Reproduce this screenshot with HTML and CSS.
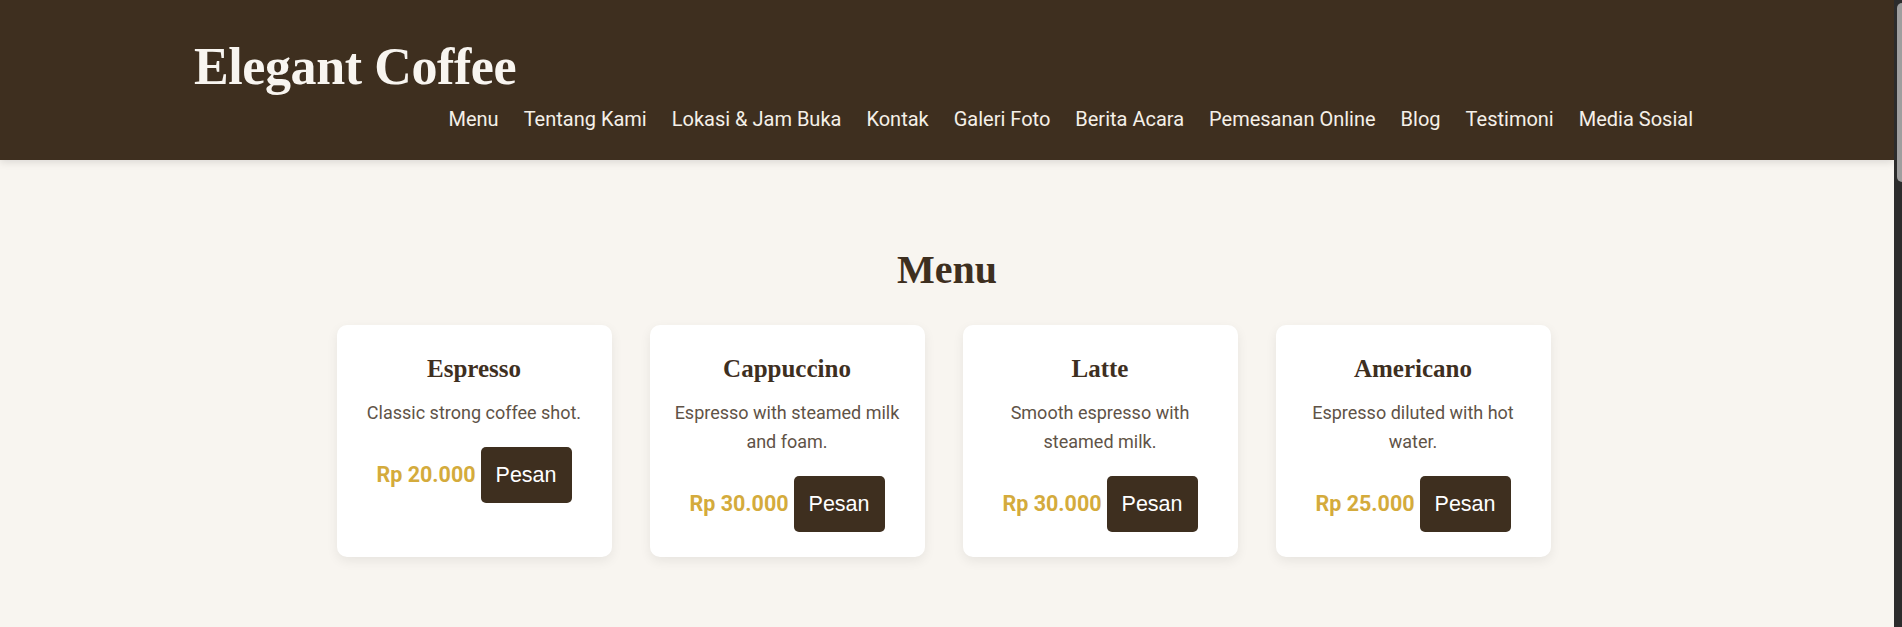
FILE: index.html
```html
<!DOCTYPE html>
<html lang="id">
<head>
<meta charset="utf-8">
<title>Elegant Coffee</title>
<link rel="stylesheet" href="styles.css">
</head>
<body>
<div class="page">
<header class="site-header">
  <div class="header-inner">
    <h1 class="logo">Elegant Coffee</h1>
    <nav class="main-nav">
      <a href="#menu">Menu</a>
      <a href="#tentang">Tentang Kami</a>
      <a href="#lokasi">Lokasi &amp; Jam Buka</a>
      <a href="#kontak">Kontak</a>
      <a href="#galeri">Galeri Foto</a>
      <a href="#acara">Berita Acara</a>
      <a href="#pesan">Pemesanan Online</a>
      <a href="#blog">Blog</a>
      <a href="#testimoni">Testimoni</a>
      <a href="#sosial">Media Sosial</a>
    </nav>
  </div>
</header>
<main class="content">
  <section class="menu-section" id="menu">
    <h2 class="section-title">Menu</h2>
    <div class="menu-grid">
      <div class="menu-card">
        <h3 class="card-title">Espresso</h3>
        <p class="card-desc">Classic strong coffee shot.</p>
        <div class="card-order"><span class="price">Rp 20.000</span> <button class="order-btn">Pesan</button></div>
      </div>
      <div class="menu-card">
        <h3 class="card-title">Cappuccino</h3>
        <p class="card-desc">Espresso with steamed milk and foam.</p>
        <div class="card-order"><span class="price">Rp 30.000</span> <button class="order-btn">Pesan</button></div>
      </div>
      <div class="menu-card">
        <h3 class="card-title">Latte</h3>
        <p class="card-desc">Smooth espresso with steamed milk.</p>
        <div class="card-order"><span class="price">Rp 30.000</span> <button class="order-btn">Pesan</button></div>
      </div>
      <div class="menu-card">
        <h3 class="card-title">Americano</h3>
        <p class="card-desc">Espresso diluted with hot water.</p>
        <div class="card-order"><span class="price">Rp 25.000</span> <button class="order-btn">Pesan</button></div>
      </div>
    </div>
  </section>
</main>
</div>
<div class="scrollbar" aria-hidden="true"><div class="scrollbar-thumb"></div></div>
</body>
</html>
```
FILE: styles.css
```css
html,
body {
  height: 100%;
}

body {
  margin: 0;
  overflow: hidden;
  display: flex;
  background: #f8f5f0;
  font-family: Roboto, "Liberation Sans", sans-serif;
  font-size: 20px;
  color: #3e2f1f;
}

.page {
  flex: 1;
  min-width: 0;
  height: 100vh;
  overflow: hidden;
  background: #f8f5f0;
}

.scrollbar {
  width: 8px;
  flex: none;
  height: 100vh;
  background: #2c2c2c;
  padding: 3px 0 0 3px;
  box-sizing: border-box;
}

.scrollbar-thumb {
  height: 179px;
  background: #9e9e9e;
  border-radius: 5px 0 0 5px;
}

.site-header {
  background: #3e2f1f;
  box-shadow: 0 2px 8px rgba(0, 0, 0, 0.12);
  position: relative;
}

.header-inner {
  width: 1506px;
  margin: 0 auto;
  padding: 37px 0 29px;
  display: flex;
  flex-direction: column;
}

.logo {
  margin: 0;
  font-family: "Liberation Serif", "DejaVu Serif", serif;
  font-weight: 700;
  font-size: 52px;
  letter-spacing: -0.4px;
  color: #f8f5f0;
  line-height: 1.15;
}

.main-nav {
  margin-top: 11px;
  padding-right: 7px;
  display: flex;
  justify-content: flex-end;
  gap: 25px;
  line-height: 1.17;
}

.main-nav a {
  color: #f5f0e8;
  text-decoration: none;
  font-size: 20px;
}

.menu-section {
  padding: 86px 0 40px;
  text-align: center;
}

.section-title {
  margin: 0 0 31px;
  font-family: "Liberation Serif", "DejaVu Serif", serif;
  font-weight: 700;
  font-size: 40px;
  line-height: 1.2;
  color: #3e2f1f;
}

.menu-grid {
  display: flex;
  justify-content: center;
  gap: 38px;
  padding-right: 7px;
}

.menu-card {
  width: 275px;
  box-sizing: border-box;
  background: #ffffff;
  border-radius: 10px;
  box-shadow: 0 4px 12px rgba(0, 0, 0, 0.07);
  padding: 30px 22px 25px;
}

.card-title {
  margin: 0 0 15px;
  font-family: "Liberation Serif", "DejaVu Serif", serif;
  font-weight: 700;
  font-size: 25px;
  line-height: 1.15;
  color: #3e2f1f;
}

.card-desc {
  margin: 0 0 19px;
  font-size: 18px;
  line-height: 1.6;
  color: #5f5347;
}

.price {
  font-size: 21.5px;
  font-weight: 700;
  color: #d4ab3c;
}

.order-btn {
  font-family: "Liberation Sans", Arial, sans-serif;
  font-size: 21.5px;
  line-height: 26px;
  padding: 15px 15px;
  border: none;
  border-radius: 5px;
  background: #3e2f1f;
  color: #ffffff;
  cursor: pointer;
}
```
